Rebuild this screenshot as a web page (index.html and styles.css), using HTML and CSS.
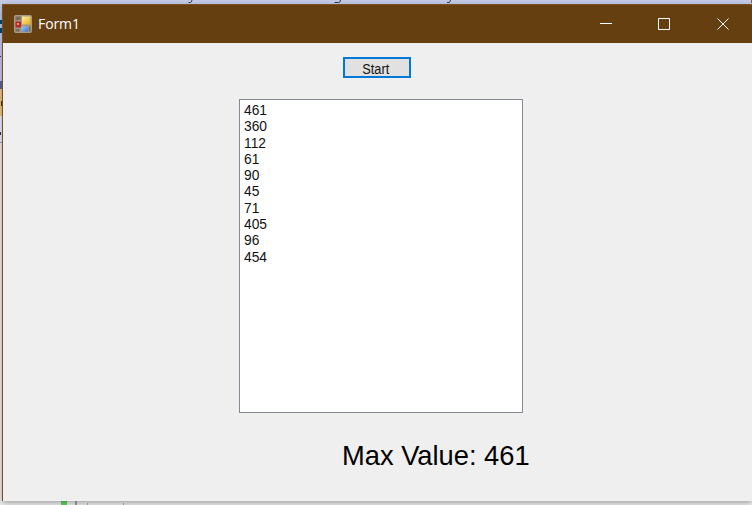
FILE: index.html
```html
<!DOCTYPE html>
<html lang="en">
<head>
<meta charset="utf-8">
<title>Form1</title>
<link rel="stylesheet" href="styles.css">
</head>
<body>
<div class="desktop">
  <svg class="backdrop" width="752" height="505" viewBox="0 0 752 505" shape-rendering="crispEdges">
    <rect width="752" height="150" fill="#c4cce9"/>
    <rect y="142" width="752" height="363" fill="#f0f0f0"/>
    <path d="M0 20h2v4H0zM0 28h2v5H0z" fill="#064779"/>
    <path d="M0 56h1v1H0z" fill="#2c2c70"/>
    <path d="M0 81h2v8H0z" fill="#5d6799"/>
    <path d="M0 89h2v27H0z" fill="#f0c984"/>
    <path d="M1 101h1v5H1z" fill="#5a2813"/>
    <path d="M0 116h2v26H0z" fill="#e9f0ff"/>
    <path d="M0 132h1v3H0z" fill="#383838"/>
    <path d="M0 142h2v1H0z" fill="#95a2c1"/>
    <path d="M751 0h1v3h-1z" fill="#8d6845"/>
    <g fill="none" stroke="#333a4d" shape-rendering="auto"><path d="M188.500 2.500h2q1 0 1.500-2.500M334.500 2.500h4q2 0 2-2.500M447 2.500h2q1 0 1.500-2.500"/></g>
    <path d="M61 501h6v4h-6z" fill="#62d965"/>
    <path d="M75 501h2v4h-2z" fill="#a0a0a0"/>
    <path d="M87 503h1v2h-1zM123 503h1v2h-1z" fill="#b0b0b0"/>
  </svg>
  <main class="window">
    <header class="titlebar">
      <svg class="app-icon" width="18" height="18" viewBox="0 0 18 18">
        <defs>
          <linearGradient id="gold" x2="1" y2="1"><stop stop-color="#fff0a0"/><stop offset="1" stop-color="#e9ad18"/></linearGradient>
          <linearGradient id="blue" x2="1" y2="1"><stop stop-color="#a9cdf8"/><stop offset="1" stop-color="#3475d2"/></linearGradient>
        </defs>
        <rect x=".5" y=".5" width="17" height="17" rx="1" fill="#a39585" stroke="#a99a87"/>
        <rect x="1.500" y="1.500" width="5" height="3.500" fill="#7b6a58"/>
        <rect x="1.500" y="6.500" width="5.500" height="6" fill="#b92720"/>
        <rect x="3" y="8" width="2" height="2" fill="#ff8b78"/>
        <rect x="1.500" y="14" width="4" height="2.500" fill="#7b6a58"/>
        <rect x="8" y="1.500" width="8.500" height="8" fill="url(#gold)"/>
        <rect x="7.500" y="11.500" width="6.500" height="5" fill="url(#blue)"/>
        <rect x="15" y="11.500" width="1.500" height="5" fill="#7b6a58"/>
      </svg>
      <h1 class="title">Form1</h1>
      <div class="controls">
        <svg class="control" width="12" height="12" viewBox="0 0 12 12"><path d="M0 5.500h12"/></svg>
        <svg class="control" width="12" height="12" viewBox="0 0 12 12"><path d="M.5.500h11v11H.5z"/></svg>
        <svg class="control" width="12" height="12" viewBox="0 0 12 12"><path d="M.5.500l11 11M11.500.500l-11 11"/></svg>
      </div>
    </header>
    <section class="form">
      <button class="start"><span class="label">Start</span></button>
      <ul class="values">
        <li>461</li><li>360</li><li>112</li><li>61</li><li>90</li><li>45</li><li>71</li><li>405</li><li>96</li><li>454</li>
      </ul>
      <p class="result">Max Value: 461</p>
    </section>
  </main>
</div>
</body>
</html>
```
FILE: styles.css
```css
* { box-sizing: border-box; }
body { margin: 0; overflow: hidden; }
.desktop {
  position: relative;
  width: 752px;
  height: 505px;
  padding: 4px 0 0 2px;
  overflow: hidden;
}
.backdrop { position: absolute; left: 0; top: 0; }
.window {
  position: relative;
  width: 750px;
  height: 497px;
  display: flex;
  flex-direction: column;
  border-left: 1px solid #765020;
  background: #efefef;
  box-shadow: 0 2px 6px rgba(0, 0, 0, .34);
}
.titlebar {
  display: flex;
  align-items: center;
  height: 39px;
  padding: 0 23px 0 11px;
  border-top: 1px solid #7a5123;
  background: #653f10;
  color: #fff;
}
.title {
  margin: 0 0 0 6px;
  font: 400 14px/20px "Open Sans", sans-serif;
  letter-spacing: -.1px;
}
.controls { display: flex; gap: 46px; margin-left: auto; }
.control { display: block; fill: none; stroke: #fff; stroke-width: 1; }
.control:last-child { margin-left: 1px; }
.form {
  display: flex;
  flex-direction: column;
  align-items: flex-start;
  font-family: "Liberation Sans", Arial, sans-serif;
  color: #111;
}
.start {
  width: 68px;
  height: 21px;
  margin: 14px 0 0 340px;
  padding: 3px 0 0;
  border: 2px solid #0078d7;
  background: #e1e1e1;
  color: #111;
  font: 14px/14px "Liberation Sans", Arial, sans-serif;
}
.label { display: inline-block; transform: translateX(-1px) scaleX(.91); }
.values {
  width: 284px;
  height: 314px;
  margin: 21px 0 0 236px;
  padding: 2px 0 0 4px;
  border: 1px solid #858b94;
  background: #fff;
  list-style: none;
  font-size: 15px;
  line-height: 16.300px;
}
.values li { transform: scaleX(.92); transform-origin: left; }
.result {
  margin: 26px 0 0 339px;
  font-size: 27.300px;
  line-height: 34px;
  color: #000;
  white-space: nowrap;
}
```
